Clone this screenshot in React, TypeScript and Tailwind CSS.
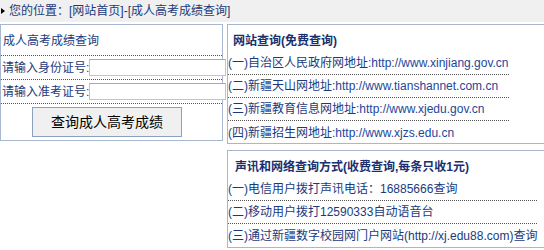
import React from "react";

const FONT = "font-['Liberation_Sans','Noto_Sans_CJK_SC',sans-serif]";

const FREE_SITES = [
  { no: "(一)", name: "自治区人民政府网地址:", url: "http://www.xinjiang.gov.cn" },
  { no: "(二)", name: "新疆天山网地址:", url: "http://www.tianshannet.com.cn" },
  { no: "(三)", name: "新疆教育信息网地址:", url: "http://www.xjedu.gov.cn" },
  { no: "(四)", name: "新疆招生网地址:", url: "http://www.xjzs.edu.cn" },
];

const PAID_WAYS = [
  { no: "(一)", text: "电信用户拨打声讯电话：16885666查询" },
  { no: "(二)", text: "移动用户拨打12590333自动语音台" },
  { no: "(三)", text: "通过新疆数字校园网门户网站(http://xj.edu88.com)查询" },
];

const LabelInput = ({ label, last }: { label: string; last?: boolean }) => (
  <div
    className={`flex items-center h-[24px] pl-[1px] whitespace-nowrap ${last ? "" : "border-b border-dotted border-[#555]"}`}
  >
    <span className="shrink-0">{label}</span>
    <input
      type="text"
      className="w-[137px] h-[17px] shrink-0 bg-white border border-[#c4c4c4] border-t-[#a8a8a8] outline-none"
    />
  </div>
);

export default function App() {
  return (
    <div className={`w-[544px] h-[250px] overflow-hidden bg-white text-[12px] leading-none text-[#1b3a7c] ${FONT}`}>
      {/* breadcrumb */}
      <div className="h-[22px] bg-[#f0f0f0] flex items-center pl-[1px]">
        <span className="w-0 h-0 border-l-[4px] border-l-black border-y-[3px] border-y-transparent mr-[4px]" />
        <span>您的位置：[网站首页]-[成人高考成绩查询]</span>
      </div>

      <div className="flex mt-[2px] items-start">
        {/* left form */}
        <div className="w-[223px] h-[117px] shrink-0 border border-[#a7b7d0] flex flex-col">
          <div className="h-[31px] flex items-center pl-[2px] pt-[2px] border-b border-dotted border-[#555]">
            成人高考成绩查询
          </div>
          <LabelInput label="请输入身份证号:" />
          <LabelInput label="请输入准考证号:" />
          <div className="flex justify-center pt-[3px]">
            <button
              type="button"
              className="w-[150px] h-[30px] ml-[-9px] bg-[#f0f0f0] border border-[#8aa2c0] text-[14px] text-black"
            >
              查询成人高考成绩
            </button>
          </div>
        </div>

        {/* right column */}
        <div className="ml-[4px] w-[340px] shrink-0 flex flex-col gap-[6px]">
          <div className="h-[120px] border border-[#a7b7d0]">
            <div className="h-[27px] flex items-end pb-[5px] pl-[5px] font-bold text-[#1a2f6e]">
              网站查询(免费查询)
            </div>
            <div className="w-fit">
              {FREE_SITES.map((s, i) => (
                <div
                  key={s.no}
                  className={`h-[23px] flex items-center whitespace-nowrap ${i < FREE_SITES.length - 1 ? "border-b border-dotted border-[#555]" : ""}`}
                >
                  {s.no}
                  {s.name}
                  <span className="text-[#23469a]">{s.url}</span>
                </div>
              ))}
            </div>
          </div>

          <div className="h-[98px] border border-[#a7b7d0]">
            <div className="h-[27px] flex items-end pb-[5px] pl-[7px] font-bold text-[#1a2f6e] whitespace-nowrap">
              声讯和网络查询方式(收费查询,每条只收1元)
            </div>
            <div className="w-fit">
              {PAID_WAYS.map((w, i) => (
                <div
                  key={w.no}
                  className={`h-[23px] flex items-center whitespace-nowrap ${i < PAID_WAYS.length - 1 ? "border-b border-dotted border-[#555]" : ""}`}
                >
                  {w.no}
                  {w.text}
                </div>
              ))}
            </div>
          </div>
        </div>
      </div>
    </div>
  );
}
